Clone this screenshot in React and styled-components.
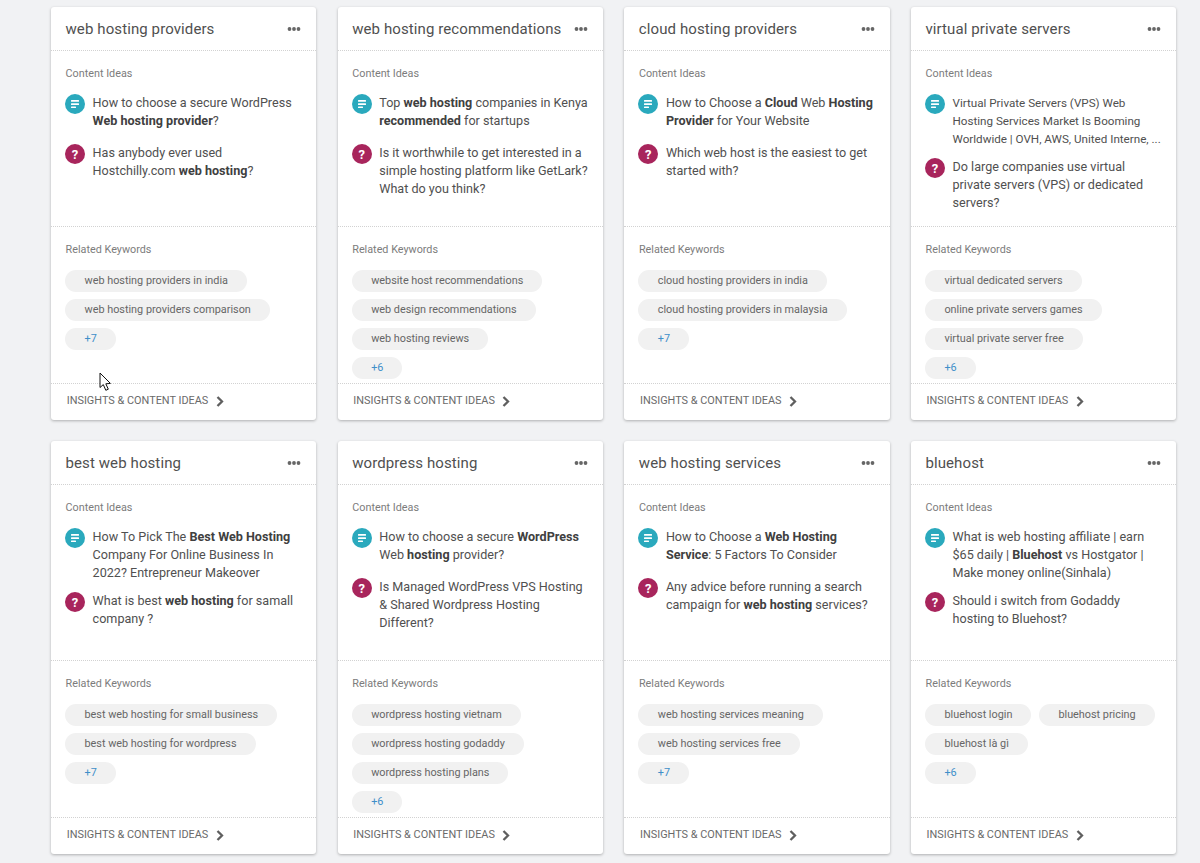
import React from "react";
import styled, { createGlobalStyle } from "styled-components";

const Global = createGlobalStyle`
  html, body { margin: 0; padding: 0; background: #f1f2f4; }
  body { font-family: Roboto, "Liberation Sans", sans-serif; overflow: hidden; }
`;

const Page = styled.div`
  position: relative;
  width: 1200px;
  height: 863px;
  box-sizing: border-box;
  padding: 7px 24px 0 51px;
  overflow: hidden;
`;

const Grid = styled.div`
  display: grid;
  grid-template-columns: repeat(4, 265.25px);
  column-gap: 21.4px;
  row-gap: 21px;
`;

const Card = styled.section`
  height: 413px;
  background: #fff;
  border-radius: 3px;
  box-shadow: 0 1px 3px rgba(0, 0, 0, 0.28);
  display: flex;
  flex-direction: column;
`;

const Head = styled.header`
  height: 43px;
  flex: none;
  border-bottom: 1px dotted #d2d2d2;
  display: flex;
  align-items: center;
  justify-content: space-between;
  padding: 0 15px 0 14.5px;
`;

const Title = styled.h2`
  margin: 0;
  font-size: 15px;
  font-weight: 400;
  letter-spacing: 0.1px;
  color: #505050;
`;

const Dots = styled.svg`
  width: 14px;
  height: 6px;
  fill: #666;
  display: block;
`;

const Ideas = styled.div`
  height: 176px;
  flex: none;
  box-sizing: border-box;
  border-bottom: 1px dotted #d2d2d2;
  padding: 16px 13px 0 14px;
`;

const Label = styled.div`
  font-size: 10.8px;
  line-height: 13px;
  color: #7c7c7c;
  padding-left: 0.6px;
`;

const IdeaList = styled.div`
  margin-top: 14px;
`;

const Idea = styled.div`
  display: flex;
  min-height: 40px;
  margin-bottom: 10px;
  gap: 7.6px;
`;

const Badge = styled.span`
  flex: none;
  width: 20px;
  height: 20px;
  border-radius: 50%;
  background: ${(p) => p.$bg};
  color: #fff;
  display: flex;
  align-items: center;
  justify-content: center;
  font-size: 13px;
  font-weight: 700;
`;

const IdeaText = styled.p`
  margin: 0;
  font-size: ${(p) => (p.$small ? "11.65px" : "12.6px")};
  line-height: 18px;
  color: #505050;
  b { font-weight: 700; color: #404040; }
`;

const Keywords = styled.div`
  flex: 1;
  min-height: 0;
  padding: 16px 14px 0;
  border-bottom: 1px dotted #d2d2d2;
`;

const Chips = styled.div`
  display: flex;
  flex-direction: column;
  align-items: flex-start;
  row-gap: 7px;
  margin-top: 14px;
`;

const ChipWrap = styled.div`
  display: flex;
  flex-wrap: wrap;
  column-gap: 7.5px;
  row-gap: 7px;
`;

const Chip = styled.span`
  height: 22px;
  line-height: 22px;
  padding: 0 19px 0 19.5px;
  border-radius: 11px;
  background: #f1f1f1;
  font-size: 10.85px;
  color: ${(p) => (p.$more ? "#3f8fc9" : "#666")};
`;

const Foot = styled.footer`
  height: 36px;
  flex: none;
  box-sizing: border-box;
  display: flex;
  align-items: center;
  padding: 0 15.7px 4px;
  gap: 7.5px;
  font-size: 10.9px;
  color: #6a6a6a;
`;

const Chevron = styled.svg`
  width: 8px;
  height: 11px;
  margin-top: 3px;
  fill: none;
  stroke: #5f5f5f;
  stroke-width: 2.3;
`;

const Cursor = styled.svg`
  position: absolute;
  left: 99px;
  top: 372px;
  width: 13px;
  height: 20px;
`;

const DocIcon = () => (
  <svg width="10" height="10" viewBox="0 0 10 10" fill="#fff">
    <rect x="1" y="1" width="8" height="1.7" rx="0.5" />
    <rect x="1" y="4.2" width="8" height="1.7" rx="0.5" />
    <rect x="1" y="7.4" width="5" height="1.7" rx="0.5" />
  </svg>
);

const cards = [
  { t: "web hosting providers",
    a: <>How to choose a secure WordPress <b>Web hosting provider</b>?</>,
    q: <>Has anybody ever used Hostchilly.com <b>web hosting</b>?</>,
    k: ["web hosting providers in india", "web hosting providers comparison"], m: "+7" },
  { t: "web hosting recommendations",
    a: <>Top <b>web hosting</b> companies in Kenya <b>recommended</b> for startups</>,
    q: <>Is it worthwhile to get interested in a simple hosting platform like GetLark? What do you think?</>,
    k: ["website host recommendations", "web design recommendations", "web hosting reviews"], m: "+6" },
  { t: "cloud hosting providers",
    a: <>How to Choose a <b>Cloud</b> Web <b>Hosting Provider</b> for Your Website</>,
    q: <>Which web host is the easiest to get started with?</>,
    k: ["cloud hosting providers in india", "cloud hosting providers in malaysia"], m: "+7" },
  { t: "virtual private servers", small: true,
    a: <>Virtual Private Servers (VPS) Web Hosting Services Market Is Booming Worldwide | OVH, AWS, United Interne, ...</>,
    q: <>Do large companies use virtual private servers (VPS) or dedicated servers?</>,
    k: ["virtual dedicated servers", "online private servers games", "virtual private server free"], m: "+6" },
  { t: "best web hosting",
    a: <>How To Pick The <b>Best Web Hosting</b> Company For Online Business In 2022? Entrepreneur Makeover</>,
    q: <>What is best <b>web hosting</b> for samall company ?</>,
    k: ["best web hosting for small business", "best web hosting for wordpress"], m: "+7" },
  { t: "wordpress hosting",
    a: <>How to choose a secure <b>WordPress</b> Web <b>hosting</b> provider?</>,
    q: <>Is Managed WordPress VPS Hosting &amp; Shared Wordpress Hosting Different?</>,
    k: ["wordpress hosting vietnam", "wordpress hosting godaddy", "wordpress hosting plans"], m: "+6" },
  { t: "web hosting services",
    a: <>How to Choose a <b>Web Hosting Service</b>: 5 Factors To Consider</>,
    q: <>Any advice before running a search campaign for <b>web hosting</b> services?</>,
    k: ["web hosting services meaning", "web hosting services free"], m: "+7" },
  { t: "bluehost",
    a: <>What is web hosting affiliate | earn $65 daily | <b>Bluehost</b> vs Hostgator | Make money online(Sinhala)</>,
    q: <>Should i switch from Godaddy hosting to Bluehost?</>,
    k: ["bluehost login", "bluehost pricing", "bluehost là gì"], m: "+6" },
];

export default function App() {
  return (
    <Page>
      <Global />
      <Grid>
        {cards.map((c) => (
          <Card key={c.t}>
            <Head>
              <Title>{c.t}</Title>
              <Dots viewBox="0 0 14 6" aria-hidden="true">
                <circle cx="2.5" cy="3" r="1.9" />
                <circle cx="7" cy="3" r="1.9" />
                <circle cx="11.5" cy="3" r="1.9" />
              </Dots>
            </Head>
            <Ideas>
              <Label>Content Ideas</Label>
              <IdeaList>
                <Idea>
                  <Badge $bg="#2aa9bd"><DocIcon /></Badge>
                  <IdeaText $small={c.small}>{c.a}</IdeaText>
                </Idea>
                <Idea>
                  <Badge $bg="#a8255c">?</Badge>
                  <IdeaText>{c.q}</IdeaText>
                </Idea>
              </IdeaList>
            </Ideas>
            <Keywords>
              <Label>Related Keywords</Label>
              <Chips>
                <ChipWrap>
                  {c.k.map((k) => <Chip key={k}>{k}</Chip>)}
                </ChipWrap>
                <Chip $more>{c.m}</Chip>
              </Chips>
            </Keywords>
            <Foot>
              INSIGHTS &amp; CONTENT IDEAS
              <Chevron viewBox="0 0 8 11" aria-hidden="true">
                <path d="M1.5 1 L6 5.5 L1.5 10" />
              </Chevron>
            </Foot>
          </Card>
        ))}
      </Grid>
      <Cursor viewBox="0 0 13 20" aria-hidden="true">
        <path d="M1 1 V15.5 L4.3 12.6 L6.8 18.3 L9.3 17.2 L6.8 11.8 L11.4 11.4 Z" fill="#fff" stroke="#111" strokeWidth="1" />
      </Cursor>
    </Page>
  );
}
